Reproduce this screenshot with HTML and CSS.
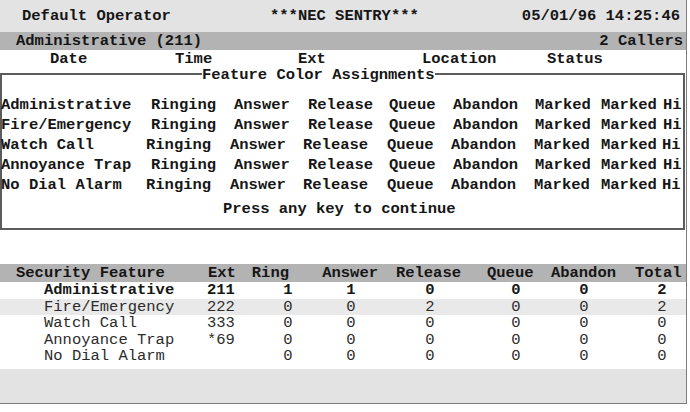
FILE: index.html
```html
<!DOCTYPE html>
<html lang="en">
<head>
<meta charset="utf-8">
<title>NEC SENTRY</title>
<link rel="stylesheet" href="styles.css">
</head>
<body>
<div class="screen">
  <header class="topbar">
    <span>Default Operator</span>
    <span>***NEC SENTRY***</span>
    <span>05/01/96 14:25:46</span>
  </header>

  <div class="featbar">
    <span>Administrative (211)</span>
    <span>2 Callers</span>
  </div>

  <div class="callheads">
    <span>Date</span>
    <span>Time</span>
    <span>Ext</span>
    <span>Location</span>
    <span>Status</span>
  </div>

  <fieldset class="dialog">
    <legend>Feature Color Assignments</legend>
    <div class="dlg-rows">
      <div class="dlg-row">
        <span>Administrative</span><span>Ringing</span><span>Answer</span><span>Release</span><span>Queue</span><span>Abandon</span><span>Marked</span><span>Marked</span><span>Hi</span>
      </div>
      <div class="dlg-row">
        <span>Fire/Emergency</span><span>Ringing</span><span>Answer</span><span>Release</span><span>Queue</span><span>Abandon</span><span>Marked</span><span>Marked</span><span>Hi</span>
      </div>
      <div class="dlg-row tight">
        <span>Watch Call</span><span>Ringing</span><span>Answer</span><span>Release</span><span>Queue</span><span>Abandon</span><span>Marked</span><span>Marked</span><span>Hi</span>
      </div>
      <div class="dlg-row">
        <span>Annoyance Trap</span><span>Ringing</span><span>Answer</span><span>Release</span><span>Queue</span><span>Abandon</span><span>Marked</span><span>Marked</span><span>Hi</span>
      </div>
      <div class="dlg-row tight">
        <span>No Dial Alarm</span><span>Ringing</span><span>Answer</span><span>Release</span><span>Queue</span><span>Abandon</span><span>Marked</span><span>Marked</span><span>Hi</span>
      </div>
    </div>
    <div class="dlg-prompt">Press any key to continue</div>
  </fieldset>

  <section class="stats">
    <div class="stats-head">
      <span>Security Feature</span>
      <span>Ext</span>
      <span class="r">Ring</span>
      <span class="r">Answer</span>
      <span class="r">Release</span>
      <span class="r">Queue</span>
      <span class="r">Abandon</span>
      <span class="r">Total</span>
    </div>
    <div class="stats-row active">
      <span>Administrative</span><span>211</span><span>1</span><span>1</span><span>0</span><span>0</span><span>0</span><span>2</span>
    </div>
    <div class="stats-row shaded">
      <span>Fire/Emergency</span><span>222</span><span>0</span><span>0</span><span>2</span><span>0</span><span>0</span><span>2</span>
    </div>
    <div class="stats-row">
      <span>Watch Call</span><span>333</span><span>0</span><span>0</span><span>0</span><span>0</span><span>0</span><span>0</span>
    </div>
    <div class="stats-row">
      <span>Annoyance Trap</span><span>*69</span><span>0</span><span>0</span><span>0</span><span>0</span><span>0</span><span>0</span>
    </div>
    <div class="stats-row">
      <span>No Dial Alarm</span><span></span><span>0</span><span>0</span><span>0</span><span>0</span><span>0</span><span>0</span>
    </div>
  </section>

  <footer class="statusbar"></footer>
</div>
</body>
</html>
```

FILE: styles.css
```css
* { box-sizing: border-box; }

html, body {
  margin: 0;
  padding: 0;
  background: #ffffff;
}

.screen {
  width: 687px;
  height: 404px;
  border-right: 1px solid #7e7e7e;
  border-bottom: 1px solid #7e7e7e;
  font-family: "Liberation Mono", "Courier New", monospace;
  font-size: 15.5px;
  font-weight: bold;
  color: #161616;
  display: flex;
  flex-direction: column;
  overflow: hidden;
}

/* title bar */
.topbar {
  height: 32px;
  background: #e3e3e3;
  display: grid;
  grid-template-columns: 248px 1fr auto;
  align-items: center;
  padding: 0 6px 0 22px;
  line-height: 18px;
}

/* current feature bar */
.featbar {
  height: 18px;
  background: #b3b3b3;
  display: flex;
  justify-content: space-between;
  align-items: center;
  padding: 0 3px 0 16px;
  line-height: 18px;
}

.callheads {
  height: 14px;
  padding-top: 2px;
  line-height: 14px;
  display: grid;
  grid-template-columns: 125px 123px 124px 125px auto;
  padding-left: 50px;
}

/* popup dialog */
.dialog {
  margin: 0 1px 0 0;
  padding: 0 0 9px 0;
  border: 2px solid #5c5c5c;
  min-width: 0;
  height: 166px;
}

.dialog legend {
  margin-left: 200px;
  padding: 3px 0 0 0;
  line-height: 16px;
}

.dlg-rows {
  padding-top: 12px;
  margin-left: -1px;
}

.dlg-row {
  display: grid;
  grid-template-columns: 150px 83px 74px 81px 64px 82px 66px 62px auto;
  height: 20px;
  line-height: 20px;
  white-space: nowrap;
}

.dlg-row.tight {
  grid-template-columns: 145px 84px 73px 84px 64px 83px 67px 61px auto;
}

.dlg-prompt {
  margin-top: 4px;
  padding-left: 221px;
  line-height: 20px;
}

/* per-feature counters */
.stats {
  margin-top: 34px;
  padding-bottom: 4px;
}

.stats-head {
  height: 18px;
  line-height: 18px;
  background: #b3b3b3;
  display: grid;
  grid-template-columns: 192px 37px 44px 89px 83px 72.5px 82.5px 65.5px;
  padding-left: 16px;
}

.stats-head .r { text-align: right; }

.stats-row {
  height: 16.5px;
  line-height: 16.5px;
  display: grid;
  grid-template-columns: 163px 38px 47.6px 63px 79px 86px 68px 78px;
  padding-left: 44px;
  font-weight: normal;
  color: #2c2c2c;
}

.stats-row span:nth-child(n+3) { text-align: right; }

.stats-row.active {
  font-weight: bold;
  color: #161616;
}

.stats-row.shaded { background: #e9e9e9; }

.statusbar {
  flex: 1;
  background: #e3e3e3;
}
```
